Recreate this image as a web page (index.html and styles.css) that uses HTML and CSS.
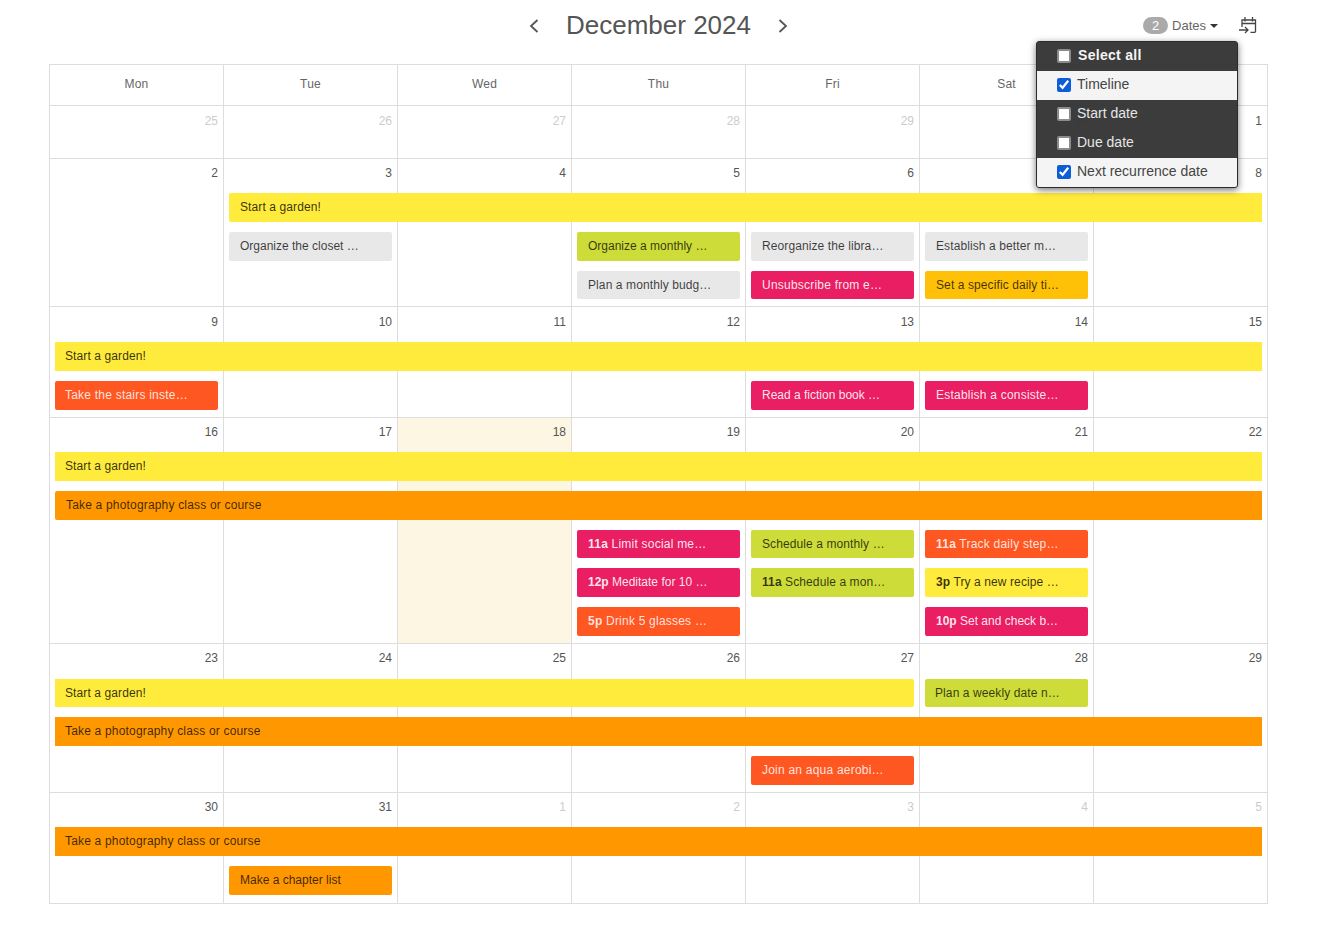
FILE: index.html
```html
<!DOCTYPE html>
<html lang="en">
<head>
<meta charset="utf-8">
<title>December 2024</title>
<link rel="stylesheet" href="styles.css">
</head>
<body>
<header class="toolbar">
  <div></div>
  <div class="month-nav">
    <button class="nav-btn" aria-label="Previous month"><svg width="10" height="14" viewBox="0 0 10 14"><path d="M8.500 1 2 7l6.500 6" fill="none" stroke="#555" stroke-width="1.800"/></svg></button>
    <h1 class="month-title">December 2024</h1>
    <button class="nav-btn" aria-label="Next month"><svg width="10" height="14" viewBox="0 0 10 14"><path d="M1.500 1 8 7l-6.500 6" fill="none" stroke="#555" stroke-width="1.800"/></svg></button>
  </div>
  <div class="tools">
    <span class="badge">2</span>
    <span class="dates-label">Dates</span>
    <span class="caret"></span>
    <svg class="cal-icon" width="18" height="18" viewBox="0 0 18 18"><path d="M3 10V3h13.500v11.500a.8.8 0 0 1-.8.8H11.500M3 6.500h13.500M6 0v4.500M13.500 0v4.500" fill="none" stroke="#444" stroke-width="1.300"/><path d="M0 13h9M6 10l3 3-3 3" fill="none" stroke="#444" stroke-width="1.300"/></svg>
  </div>
</header>

<main class="calendar">
  <div class="head-row">
    <div class="head-cell">Mon</div><div class="head-cell">Tue</div><div class="head-cell">Wed</div><div class="head-cell">Thu</div><div class="head-cell">Fri</div><div class="head-cell">Sat</div><div class="head-cell">Sun</div>
  </div>

  <section class="week w1">
    <div class="day c1 other">25</div><div class="day c2 other">26</div><div class="day c3 other">27</div><div class="day c4 other">28</div><div class="day c5 other">29</div><div class="day c6 other">30</div><div class="day c7">1</div>
  </section>

  <section class="week w2">
    <div class="day c1">2</div><div class="day c2">3</div><div class="day c3">4</div><div class="day c4">5</div><div class="day c5">6</div><div class="day c6">7</div><div class="day c7">8</div>
    <div class="ev yellow c2 s6 r1 start">Start a garden!</div>
    <div class="ev gray c2 r2 snug">Organize the closet …</div>
    <div class="ev lime c4 r2 snug">Organize a monthly …</div>
    <div class="ev gray c5 r2">Reorganize the libra…</div>
    <div class="ev gray c6 r2">Establish a better m…</div>
    <div class="ev gray c4 r3">Plan a monthly budg…</div>
    <div class="ev pink c5 r3">Unsubscribe from e…</div>
    <div class="ev amber c6 r3">Set a specific daily ti…</div>
  </section>

  <section class="week w3">
    <div class="day c1">9</div><div class="day c2">10</div><div class="day c3">11</div><div class="day c4">12</div><div class="day c5">13</div><div class="day c6">14</div><div class="day c7">15</div>
    <div class="ev yellow c1 s7 r1 flat tight">Start a garden!</div>
    <div class="ev red c1 r2 tight">Take the stairs inste…</div>
    <div class="ev pink c5 r2 snug">Read a fiction book …</div>
    <div class="ev pink c6 r2">Establish a consiste…</div>
  </section>

  <section class="week w4">
    <div class="day c1">16</div><div class="day c2">17</div><div class="day c3 today">18</div><div class="day c4">19</div><div class="day c5">20</div><div class="day c6">21</div><div class="day c7">22</div>
    <div class="ev yellow c1 s7 r1 flat tight">Start a garden!</div>
    <div class="ev orange c1 s7 r2 start">Take a photography class or course</div>
    <div class="ev pink c4 r3"><b>11a</b> Limit social me…</div>
    <div class="ev lime c5 r3">Schedule a monthly …</div>
    <div class="ev red c6 r3"><b>11a</b> Track daily step…</div>
    <div class="ev pink c4 r4 snug"><b>12p</b> Meditate for 10 …</div>
    <div class="ev lime c5 r4"><b>11a</b> Schedule a mon…</div>
    <div class="ev yellow c6 r4"><b>3p</b> Try a new recipe …</div>
    <div class="ev red c4 r5"><b>5p</b> Drink 5 glasses …</div>
    <div class="ev pink c6 r5 snug"><b>10p</b> Set and check b…</div>
  </section>

  <section class="week w5">
    <div class="day c1">23</div><div class="day c2">24</div><div class="day c3">25</div><div class="day c4">26</div><div class="day c5">27</div><div class="day c6">28</div><div class="day c7">29</div>
    <div class="ev yellow c1 s5 r1 end tight">Start a garden!</div>
    <div class="ev lime c6 r1 tight">Plan a weekly date n…</div>
    <div class="ev orange c1 s7 r2 flat tight">Take a photography class or course</div>
    <div class="ev red c5 r3">Join an aqua aerobi…</div>
  </section>

  <section class="week w6">
    <div class="day c1">30</div><div class="day c2">31</div><div class="day c3 other">1</div><div class="day c4 other">2</div><div class="day c5 other">3</div><div class="day c6 other">4</div><div class="day c7 other">5</div>
    <div class="ev orange c1 s7 r1 flat tight">Take a photography class or course</div>
    <div class="ev orange c2 r2 snug">Make a chapter list</div>
  </section>
</main>

<div class="menu">
  <label class="menu-row all"><input type="checkbox"><span>Select all</span></label>
  <label class="menu-row on"><input type="checkbox" checked><span>Timeline</span></label>
  <label class="menu-row"><input type="checkbox"><span>Start date</span></label>
  <label class="menu-row"><input type="checkbox"><span>Due date</span></label>
  <label class="menu-row on"><input type="checkbox" checked><span>Next recurrence date</span></label>
</div>
</body>
</html>
```
FILE: styles.css
```css
* { box-sizing: border-box; }
html, body { height: 100%; }
body {
  margin: 0;
  padding: 0 49px;
  background: #fff;
  color: #555;
  font-family: "Liberation Sans", Arial, sans-serif;
  font-size: 12px;
  overflow: hidden;
}

/* toolbar */
.toolbar {
  display: grid;
  grid-template-columns: 1fr auto 1fr;
  align-items: center;
  width: 1219px;
  height: 64px;
  padding-bottom: 13px;
}
.month-nav { display: flex; align-items: center; gap: 27px; }
.nav-btn {
  display: flex;
  padding: 0;
  border: 0;
  background: none;
}
.month-title {
  margin: 0 0 2px;
  font-size: 26px;
  font-weight: 400;
  line-height: 30px;
  color: #555;
}
.tools {
  display: flex;
  align-items: center;
  justify-content: flex-end;
  padding-right: 11px;
}
.badge {
  width: 25px;
  height: 17px;
  border-radius: 9px;
  background: #aaa;
  color: #fff;
  font-size: 13px;
  line-height: 17px;
  text-align: center;
}
.dates-label { margin-left: 4px; font-size: 13px; color: #666; }
.caret {
  margin-left: 4px;
  border-left: 4px solid transparent;
  border-right: 4px solid transparent;
  border-top: 4px solid #333;
}
.cal-icon { margin-left: 21px; }

/* calendar */
.calendar {
  width: 1219px;
  border: 1px solid #ddd;
  border-width: 1px 1px 1px 0;
}
.head-row { display: grid; grid-template-columns: repeat(7, 174px); height: 40px; }
.head-cell {
  border-left: 1px solid #ddd;
  line-height: 39px;
  text-align: center;
  letter-spacing: .2px;
  color: #666;
}
.week {
  display: grid;
  grid-template-columns: repeat(7, 174px);
  border-top: 1px solid #ddd;
}
.w1 { height: 53px; grid-template-rows: 1fr; }
.w2 { height: 148px; grid-template-rows: 24px repeat(3, 38.75px) 1fr; }
.w3 { height: 111px; grid-template-rows: 25px repeat(2, 38.75px) 1fr; }
.w4 { height: 226px; grid-template-rows: 24px repeat(5, 38.75px) 1fr; }
.w5 { height: 149px; grid-template-rows: 24.5px repeat(3, 38.75px) 1fr; }
.w6 { height: 111px; grid-template-rows: 24px repeat(2, 38.75px) 1fr; }

.day {
  grid-row: 1 / -1;
  border-left: 1px solid #ddd;
  padding: 7px 5px 0 0;
  line-height: 14px;
  text-align: right;
  color: #555;
}
.w1 .day, .w3 .day { padding-top: 8px; }
.day.other { color: #ccc; }
.day.today { background: #fdf6e3; }

.c1 { grid-column-start: 1; }
.c2 { grid-column-start: 2; }
.c3 { grid-column-start: 3; }
.c4 { grid-column-start: 4; }
.c5 { grid-column-start: 5; }
.c6 { grid-column-start: 6; }
.c7 { grid-column-start: 7; }
.s5 { grid-column-end: span 5; }
.s6 { grid-column-end: span 6; }
.s7 { grid-column-end: span 7; }
.r1 { grid-row-start: 2; }
.r2 { grid-row-start: 3; }
.r3 { grid-row-start: 4; }
.r4 { grid-row-start: 5; }
.r5 { grid-row-start: 6; }

.ev {
  height: 28.75px;
  margin: 10px 5px 0 6px;
  padding-left: 11px;
  border-radius: 2px;
  line-height: 29.5px;
  letter-spacing: .1px;
  white-space: nowrap;
  overflow: hidden;
}
.ev.tight { padding-left: 10px; }
.ev.flat { border-radius: 0; }
.ev.start { border-radius: 2px 0 0 2px; }
.ev.end { border-radius: 0 2px 2px 0; }
.yellow { background: #ffeb3b; color: rgba(0,0,0,.8); }
.orange { background: #ff9800; color: rgba(0,0,0,.75); letter-spacing: .18px; }
.amber  { background: #ffc107; color: rgba(0,0,0,.75); }
.lime   { background: #cddc39; color: rgba(0,0,0,.75); }
.gray   { background: #e8e8e8; color: rgba(0,0,0,.75); }
.pink   { background: #e91e63; color: rgba(255,255,255,.9); letter-spacing: .22px; }
.red    { background: #ff5722; color: rgba(255,255,255,.85); letter-spacing: .22px; }
.ev.snug { letter-spacing: 0; }

/* dropdown */
.menu {
  position: absolute;
  top: 41px;
  left: 1036px;
  width: 202px;
  border: 1px solid #2b2b2b;
  border-radius: 3px;
  background: rgba(45,45,45,.93);
  box-shadow: 0 2px 7px rgba(0,0,0,.55);
  overflow: hidden;
}
.menu-row {
  display: flex;
  align-items: center;
  height: 29px;
  padding: 0 0 4px 20px;
  font-size: 14px;
  color: #e6e6e6;
}
.menu-row input {
  width: 14px;
  height: 14px;
  margin: 3px 6px 0 0;
  accent-color: #0b5ed7;
}
.menu-row input:not(:checked) {
  appearance: none;
  border: 2px solid #8c8c8c;
  border-radius: 2px;
  background: #fff;
}
.menu-row.all { font-weight: 700; letter-spacing: .3px; color: #f5f5f5; }
.menu-row.all input { margin-right: 7px; }
.menu-row.on { background: #f4f4f4; color: #444; }
```
